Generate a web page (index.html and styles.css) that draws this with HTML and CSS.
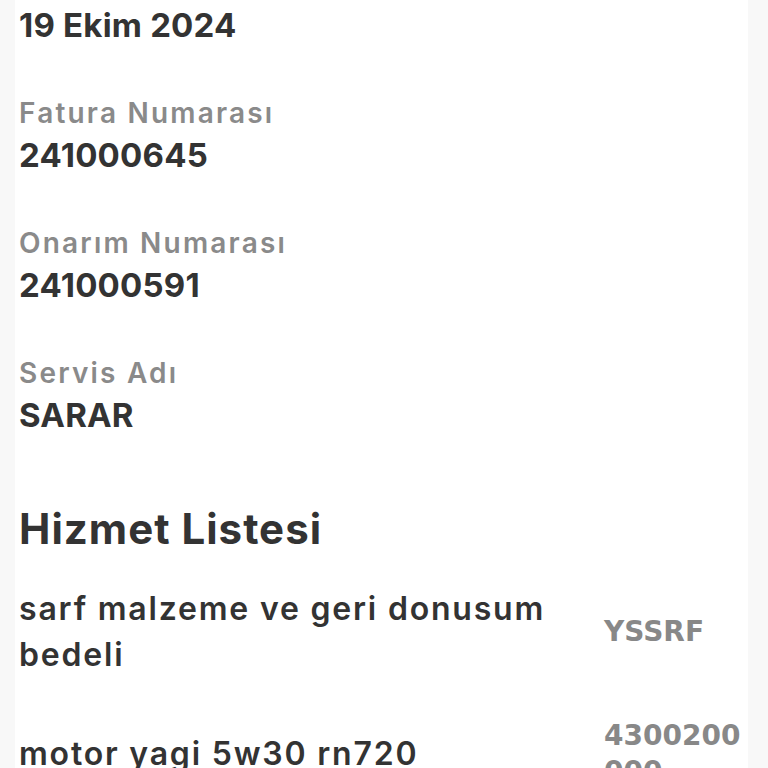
FILE: index.html
```html
<!DOCTYPE html>
<html lang="tr">
<head>
    <meta charset="UTF-8">
    <meta name="viewport" content="width=device-width, initial-scale=1.0">
    <title>Fatura Detayı</title>
    <link rel="stylesheet" href="styles.css">
</head>
<body>
    <div class="sheet">
        <!-- Fatura bilgileri -->
        <div class="field first">
            <div class="field-value">19 Ekim 2024</div>
        </div>
        <div class="field">
            <div class="field-label">Fatura Numarası</div>
            <div class="field-value">241000645</div>
        </div>
        <div class="field">
            <div class="field-label">Onarım Numarası</div>
            <div class="field-value">241000591</div>
        </div>
        <div class="field">
            <div class="field-label">Servis Adı</div>
            <div class="field-value">SARAR</div>
        </div>

        <!-- Hizmet listesi -->
        <h2 class="section-title">Hizmet Listesi</h2>
        <div class="service-list">
            <div class="service-row">
                <div class="service-name">sarf malzeme ve geri donusum bedeli</div>
                <div class="service-code">YSSRF</div>
            </div>
            <div class="service-row">
                <div class="service-name">motor yagi 5w30 rn720</div>
                <div class="service-code">4300200000</div>
            </div>
        </div>
    </div>
</body>
</html>
```

FILE: styles.css
```css
body { margin: 0; padding: 0; background: #f8f8f8; font-family: Inter, "Noto Sans", sans-serif; color: #333; }
.sheet {
    margin: 0 20px 0 15px; background: #fff; padding: 1px 0 0 4px;
    min-height: 768px;
}
/* Bilgi alanları */
.field { padding-top: 46px; }
.field.first { padding-top: 0; }
.field-label { font-size: 28px; font-weight: 600; color: #8a8a8a; line-height: 36px; letter-spacing: 2.2px; }
.field-value { font-size: 33px; font-weight: 700; color: #333; line-height: 48px; letter-spacing: 0.2px; }
/* Hizmet listesi */
.section-title { margin: 64px 0 31px; font-size: 42px; font-weight: 700; line-height: 52px; letter-spacing: 1px; }
.service-row {
    display: grid; grid-template-columns: 1fr 144px; column-gap: 30px; align-items: center;
    margin-bottom: 40px;
}
.service-name { font-size: 32px; font-weight: 600; line-height: 46px; letter-spacing: 1.8px; }
.service-code {
    font-family: "DejaVu Sans", sans-serif; font-size: 28px; font-weight: 700; color: #888;
    line-height: 36px; word-break: break-all;
}
```
